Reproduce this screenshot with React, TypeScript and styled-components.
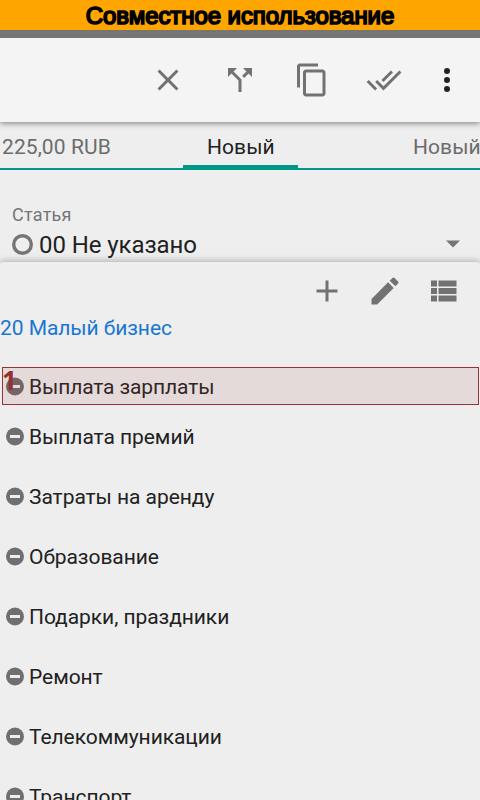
import React from "react";
import styled, { createGlobalStyle } from "styled-components";

const GlobalStyle = createGlobalStyle`
  * { box-sizing: border-box; }
  html, body { margin: 0; padding: 0; overflow: hidden; background: #eeeeee; }
  body { font-family: Roboto, "Noto Sans", sans-serif; color: #212121; }
  svg { display: block; flex: none; }
`;

const Screen = styled.div`
  width: 480px;
  height: 800px;
  overflow: hidden;
  display: flex;
  flex-direction: column;
  background: #eeeeee;
`;

const Banner = styled.header`
  flex: none;
  height: 30px;
  background: #ffa500;
  color: #000;
  font: 24px/32px "Liberation Sans", sans-serif;
  letter-spacing: -0.08px;
  text-align: center;
  white-space: nowrap;
  -webkit-text-stroke: 1.7px #000;
`;

const StatusBar = styled.div`
  flex: none;
  height: 8px;
  background: #757575;
  position: relative;
  z-index: 2;
`;

const Toolbar = styled.div`
  flex: none;
  height: 84px;
  display: flex;
  align-items: center;
  justify-content: flex-end;
  gap: 36px;
  padding-right: 15px;
  background: #f4f4f4;
  box-shadow: 0 1px 6px rgba(0, 0, 0, 0.5);
  z-index: 1;
`;

const IconButton = styled.button<{ $tone?: string; $pull?: number }>`
  width: 36px;
  height: 36px;
  padding: 0;
  border: 0;
  background: none;
  color: ${(p) => p.$tone ?? "#727272"};
  margin-left: ${(p) => p.$pull ?? 0}px;
`;

const Tabs = styled.nav`
  flex: none;
  height: 48px;
  display: flex;
  justify-content: space-between;
  border-bottom: 2px solid #009688;
`;

const Tab = styled.div<{ $active?: boolean; $width: number; $indent?: number }>`
  width: ${(p) => p.$width}px;
  height: 46px;
  padding-left: ${(p) => p.$indent ?? 0}px;
  font-size: 21px;
  line-height: 50px;
  letter-spacing: 0.08px;
  white-space: nowrap;
  color: ${(p) => (p.$active ? "#212121" : "#6c6c6c")};
  border-bottom: ${(p) => (p.$active ? "3px solid #009688" : "0")};
`;

const Field = styled.section`
  flex: none;
  height: 92px;
  padding: 34px 20px 0 12px;
`;

const FieldLabel = styled.div`
  font-size: 18px;
  line-height: 22px;
  letter-spacing: 0.25px;
  color: #757575;
`;

const FieldRow = styled.div`
  display: flex;
  align-items: center;
  height: 36px;
  gap: 6px;
`;

const FieldValue = styled.div`
  flex: 1;
  padding-top: 2px;
  font-size: 24px;
  line-height: 36px;
  letter-spacing: -0.08px;
`;

const Sheet = styled.section`
  flex: 1;
  min-height: 0;
  overflow: hidden;
  border-radius: 3px 3px 0 0;
  background: #eeeeee;
  box-shadow: 0 -1px 7px rgba(0, 0, 0, 0.28);
`;

const SheetActions = styled.div`
  height: 47px;
  display: flex;
  justify-content: flex-end;
  gap: 22px;
  padding: 11px 19px 0 0;
`;

const GroupTitle = styled.h2`
  margin: 0;
  height: 58px;
  font-size: 21px;
  font-weight: 400;
  line-height: 38px;
  letter-spacing: -0.06px;
  color: #1976d2;
`;

const Row = styled.div`
  height: 60px;
  padding-left: 6px;
  display: flex;
  align-items: center;
  gap: 5px;
  font-size: 21px;
  letter-spacing: -0.06px;
  white-space: nowrap;
`;

const HighlightedRow = styled(Row)`
  position: relative;
  height: 38px;
  margin: 0 1px 2px 2px;
  padding: 2px 0 0 3px;
  border: 1px solid #993333;
  background: #e5dada;
  color: #332525;
  letter-spacing: -0.12px;
`;

const Marker = styled.span`
  position: absolute;
  left: -1px;
  top: -1px;
  font: bold 26px/26px "Open Sans", sans-serif;
  color: #933033;
`;

const paths = {
  close: "M19 6.41L17.59 5 12 10.59 6.41 5 5 6.41 10.59 12 5 17.59 6.41 19 12 13.41 17.59 19 19 17.59 13.41 12z",
  split: "M14 4l2.29 2.29-2.88 2.88 1.42 1.42 2.88-2.88L20 10V4zm-4 0H4v6l2.29-2.29 4.71 4.7V20h2v-8.41l-5.29-5.3z",
  copy: "M16 1H4c-1.1 0-2 .9-2 2v14h2V3h12V1zm3 4H8c-1.1 0-2 .9-2 2v14c0 1.1.9 2 2 2h11c1.1 0 2-.9 2-2V7c0-1.1-.9-2-2-2zm0 16H8V7h11v14z",
  doneAll: "M18 7l-1.41-1.41-6.34 6.34 1.41 1.41L18 7zm4.24-1.41L11.66 16.17 7.48 12l-1.41 1.41L11.66 19l12-12-1.42-1.41zM.41 13.41L6 19l1.41-1.41L1.83 12 .41 13.41z",
  more: "M12 8a2 2 0 1 0 0-4 2 2 0 0 0 0 4zm0 2a2 2 0 1 0 0 4 2 2 0 0 0 0-4zm0 6a2 2 0 1 0 0 4 2 2 0 0 0 0-4z",
  add: "M19 13h-6v6h-2v-6H5v-2h6V5h2v6h6v2z",
  edit: "M3 17.25V21h3.75L17.81 9.94l-3.75-3.75L3 17.25zM20.71 7.04a1 1 0 0 0 0-1.41l-2.34-2.34a1 1 0 0 0-1.41 0l-1.83 1.83 3.75 3.75 1.83-1.83z",
  list: "M4 14h4v-4H4v4zm0 5h4v-4H4v4zM4 9h4V5H4v4zm5 5h12v-4H9v4zm0 5h12v-4H9v4zM9 5v4h12V5H9z",
};

const Icon = ({ name }: { name: keyof typeof paths }) => (
  <svg width="36" height="36" viewBox="0 0 24 24" fill="currentColor">
    <path d={paths[name]} />
  </svg>
);

const MinusBadge = ({ fill = "#6f6f6f", bar = "#eeeeee" }: { fill?: string; bar?: string }) => (
  <svg width="18" height="20" viewBox="0 0 18 20">
    <circle cx="9" cy="9.5" r="9" fill={fill} />
    <rect x="4" y="8" width="10" height="3" fill={bar} />
  </svg>
);

const categories = [
  "Выплата премий",
  "Затраты на аренду",
  "Образование",
  "Подарки, праздники",
  "Ремонт",
  "Телекоммуникации",
  "Транспорт",
];

export default function App() {
  return (
    <>
      <GlobalStyle />
      <Screen>
        <Banner>Совместное использование</Banner>
        <StatusBar />
        <Toolbar>
          <IconButton><Icon name="close" /></IconButton>
          <IconButton><Icon name="split" /></IconButton>
          <IconButton><Icon name="copy" /></IconButton>
          <IconButton><Icon name="doneAll" /></IconButton>
          <IconButton $tone="#212121" $pull={-9}><Icon name="more" /></IconButton>
        </Toolbar>
        <Tabs>
          <Tab $width={183} $indent={2}>225,00 RUB</Tab>
          <Tab $width={115} $indent={24} $active>Новый</Tab>
          <Tab $width={182} $indent={115}>Новый</Tab>
        </Tabs>
        <Field>
          <FieldLabel>Статья</FieldLabel>
          <FieldRow>
            <svg width="21" height="21" viewBox="0 0 21 21">
              <circle cx="10.5" cy="10.5" r="8.8" fill="none" stroke="#757575" strokeWidth="3.4" />
            </svg>
            <FieldValue>00 Не указано</FieldValue>
            <svg width="14" height="8" viewBox="0 0 14 8">
              <path d="M0 .5h14l-7 7z" fill="#757575" />
            </svg>
          </FieldRow>
        </Field>
        <Sheet>
          <SheetActions>
            <IconButton><Icon name="add" /></IconButton>
            <IconButton><Icon name="edit" /></IconButton>
            <IconButton><Icon name="list" /></IconButton>
          </SheetActions>
          <GroupTitle>20 Малый бизнес</GroupTitle>
          <HighlightedRow>
            <MinusBadge fill="#756565" bar="#e5dada" />
            Выплата зарплаты
            <Marker>1</Marker>
          </HighlightedRow>
          {categories.map((name) => (
            <Row key={name}>
              <MinusBadge />
              {name}
            </Row>
          ))}
        </Sheet>
      </Screen>
    </>
  );
}
